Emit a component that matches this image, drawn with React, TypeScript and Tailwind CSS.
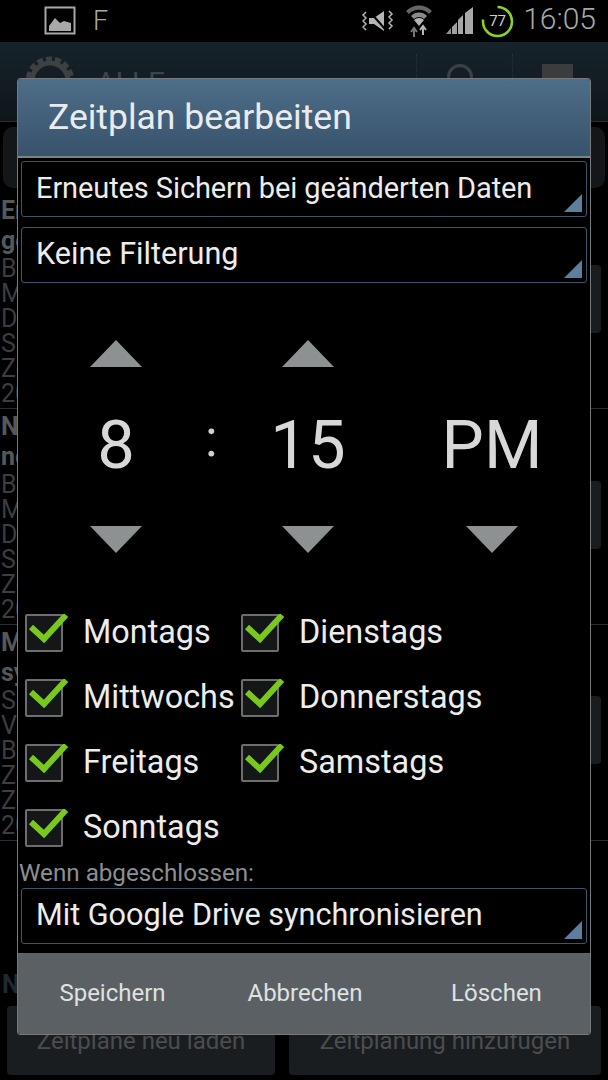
const sans = "font-['Roboto','Liberation_Sans',sans-serif]";

function Up() {
  return (
    <svg width="54" height="30" viewBox="0 0 54 30" className="block">
      <polygon points="27,1 53,28 1,28" fill="#8e9192" />
    </svg>
  );
}
function Down() {
  return (
    <svg width="54" height="30" viewBox="0 0 54 30" className="block">
      <polygon points="1,1 53,1 27,28" fill="#8e9192" />
    </svg>
  );
}

function Spinner({ text, cls, noUp }: { text: string; cls: string; noUp?: boolean }) {
  return (
    <div className={`flex flex-col items-center ${cls}`}>
      {noUp ? <div className="h-[30px]"></div> : <Up />}
      <div className="h-[156px] pb-[3px] flex items-center text-[67px] leading-none text-[#d8d8d8] font-normal">{text}</div>
      <Down />
    </div>
  );
}

function Select({ text, cls }: { text: string; cls: string }) {
  return (
    <div className={`relative mx-[3px] h-[56px] shrink-0 rounded-[3px] border border-[#3f5468] bg-black pl-[14px] flex items-center text-[#ececec] ${cls}`}>
      {text}
      <svg width="18" height="18" viewBox="0 0 18 18" className="absolute right-[4px] bottom-[4px]">
        <polygon points="18,0 18,18 0,18" fill="#5d7f9d" />
      </svg>
    </div>
  );
}

function Check({ label }: { label: string }) {
  return (
    <div className="flex items-center h-[65px]">
      <div className="relative ml-[7px] w-[38px] h-[38px] border-2 border-[#6e6e6e] rounded-[2px] bg-[#141618] shrink-0">
        <svg width="44" height="30" viewBox="0 0 44 30" className="absolute left-[-2px] top-[-2px]">
          <path d="M6 13 L19 25 L41 1" fill="none" stroke="#78c81e" strokeWidth="6" />
        </svg>
      </div>
      <div className="ml-[20px] text-[32.4px] text-[#ececec] whitespace-nowrap">{label}</div>
    </div>
  );
}

function BgBlock({ lines, top }: { lines: [string, boolean][]; top: string }) {
  return (
    <div className="flex justify-between pt-[3px] pb-[2px] pl-[1px] pr-[7px] border-b border-[#2a2d2f]">
      <div>
        {lines.map(([t, b], i) => (
          <div key={i} className={`whitespace-nowrap text-[25px] ${b ? "h-[30px] leading-[30px] font-bold text-[#53585b]" : "h-[25px] leading-[25px] text-[#3b3d3f]"}`}>{t}</div>
        ))}
      </div>
      <div className={`w-[60px] h-[68px] rounded-[4px] bg-[#1a1d1f] ${top}`}></div>
    </div>
  );
}

export default function App() {
  return (
    <div className={`relative w-[608px] h-[1080px] overflow-hidden bg-black ${sans}`}>
      {/* status bar */}
      <div className="h-[42px] bg-black flex items-center">
        <svg width="32" height="29" viewBox="0 0 32 29" className="ml-[44px] mt-[-1px]">
          <rect x="1.5" y="1.5" width="29" height="26" fill="none" stroke="#a8a8a8" strokeWidth="2" />
          <path d="M5 25 V20 L11 12 L16 17 L20 15 L27 17 V25 Z" fill="#a8a8a8" />
        </svg>
        <div className="ml-[17px] text-[27px] leading-none text-[#a8a8a8] font-light">F</div>
        <div className="ml-auto flex items-center">
          <svg width="32" height="24" viewBox="0 0 32 24" className="mr-[11px]">
            <path d="M7 9 H12 L22 2 V22 L12 15 H7 Z" fill="#b5b5b5" />
            <path d="M8 3 L23 20" stroke="#000" strokeWidth="2" />
            <path d="M4 3 L1 6 L4 9 L1 12 L4 15 L1 18 L4 21 M27 2 L30 5 L27 8 L30 11 L27 14 L30 17 L27 20" fill="none" stroke="#b5b5b5" strokeWidth="1.5" />
          </svg>
          <svg width="28" height="32" viewBox="0 0 28 32" className="mr-[13px]">
            <path d="M1 6 A18 18 0 0 1 27 6 L24 9 A14 14 0 0 0 4 9 Z" fill="#666" />
            <path d="M6 11 A11 11 0 0 1 22 11 L19 14 A7 7 0 0 0 9 14 Z" fill="#8a8a8a" />
            <path d="M14 21 L9 15 A7 7 0 0 1 19 15 Z" fill="#b5b5b5" />
            <path d="M9 32 V24 M6 27 L9 23 L12 27" stroke="#777" strokeWidth="2" fill="none" />
            <path d="M18 21 V30 M15 25 L18 21 L21 25" stroke="#b5b5b5" strokeWidth="2" fill="none" />
          </svg>
          <svg width="28" height="28" viewBox="0 0 28 28" className="mr-[7px]">
            <path d="M0 27 L5 21 V27 Z" fill="#8f8f8f" />
            <path d="M6 27 V20 L11 15 V27 Z" fill="#a0a0a0" />
            <path d="M12 27 V13 L17 8 V27 Z" fill="#a8a8a8" />
            <path d="M19 27 V6 L27 0 V27 Z" fill="#a8a8a8" />
          </svg>
          <div className="relative w-[33px] h-[33px] mr-[9px]">
            <svg width="33" height="33" viewBox="0 0 33 33" className="absolute inset-0">
              <circle cx="16.5" cy="16.5" r="14.5" fill="none" stroke="#8cd21e" strokeWidth="2.5" strokeDasharray="70 21" transform="rotate(-90 16.5 16.5)" />
            </svg>
            <div className="absolute inset-0 flex items-center justify-center text-[15px] text-[#d0d0d0] leading-none">77</div>
          </div>
          <div className="text-[30px] leading-none text-[#a8a8a8] font-light mr-[12px] mb-[4px]">16:05</div>
        </div>
      </div>
      {/* action bar (behind dialog) */}
      <div className="h-[80px] bg-gradient-to-b from-[#16232b] to-[#10161a] flex items-start border-b border-[#2a2d2f]">
        <svg width="50" height="50" viewBox="0 0 50 50" className="ml-[25px] mt-[14px]">
          <circle cx="25" cy="25" r="22" fill="none" stroke="#3d4144" strokeWidth="5" strokeDasharray="6 3" />
          <circle cx="25" cy="25" r="18" fill="none" stroke="#3d4144" strokeWidth="5" />
        </svg>
        <div className="ml-[21px] mt-[26px] text-[30px] leading-none text-[#3e4346]">ALLE</div>
        <div className="ml-auto mt-[12px] h-[50px] border-l border-dotted border-[#2c3338]"></div>
        <div className="ml-[30px] mt-[22px] w-[26px] h-[26px] rounded-full border-[3px] border-[#3e4144]"></div>
        <div className="ml-[39px] mt-[12px] h-[50px] border-l border-dotted border-[#2c3338]"></div>
        <div className="ml-[29px] mt-[22px] w-[31px] h-[31px] bg-[#3a3c3d] mr-[35px]"></div>
      </div>
      {/* page behind */}
      <div>
        <div className="mx-[3px] mt-[5px] h-[61px] rounded-[10px] bg-[#141719]"></div>
        <div className="mt-[5px]">
          <BgBlock top="mt-[69px]" lines={[["Erneutes", true], ["geänderte", true], ["Backup", false], ["Mit", false], ["Die", false], ["Sa", false], ["Zeit", false], ["2013", false]]} />
          <BgBlock top="mt-[69px]" lines={[["Nur", true], ["neue", true], ["Backup", false], ["Mit", false], ["Die", false], ["Sa", false], ["Zeit", false], ["2013", false]]} />
          <BgBlock top="mt-[68px]" lines={[["Mit", true], ["sync", true], ["Sa", false], ["Von", false], ["Backup", false], ["Zeit", false], ["Zeit", false], ["2013", false]]} />
        </div>
      </div>
      <div className="absolute left-0 bottom-[5px] w-full flex flex-col">
        <div className="pl-[2px] text-[#1f2a30] font-bold text-[25px] leading-[30px] mb-[6px]">N</div>
        <div className="flex gap-[14px] pl-[7px]">
          <div className="w-[268px] h-[69px] rounded-[4px] bg-[#1a1d1f] flex items-center justify-center text-[24px] text-[#4a4d4f]">Zeitpläne neu laden</div>
          <div className="w-[312px] h-[69px] rounded-[4px] bg-[#1a1d1f] flex items-center justify-center text-[24px] text-[#4a4d4f]">Zeitplanung hinzufügen</div>
        </div>
      </div>
      {/* dialog */}
      <div className="absolute left-[17px] top-[78px] w-[574px] h-[957px] rounded-[3px] border border-[#767a7d] bg-black flex flex-col overflow-hidden">
        <div className="h-[79px] shrink-0 bg-gradient-to-b from-[#4e6e89] to-[#38526b] border-b-2 border-[#7a8388] pl-[30px] flex items-center text-[35.5px] text-[#e8ecef]">Zeitplan bearbeiten</div>
        <div className="h-[3px] shrink-0"></div>
        <Select text="Erneutes Sichern bei geänderten Daten" cls="text-[29px] tracking-[-0.1px]" />
        <div className="h-[10px] shrink-0"></div>
        <Select text="Keine Filterung" cls="text-[30.6px] pb-[2px]" />
        <div className="h-[56px] shrink-0"></div>
        <div className="flex shrink-0 h-[216px]">
          <Spinner text="8" cls="w-[196px]" />
          <div className="w-[0px] relative">
            <div className="absolute left-[-9px] top-[74px] text-[52px] leading-none text-[#d0d0d0]">:</div>
          </div>
          <Spinner text="15" cls="w-[188px]" />
          <Spinner text="PM" noUp cls="w-[180px]" />
        </div>
        <div className="h-[45px] shrink-0"></div>
        <div className="grid grid-cols-[216px_1fr] shrink-0">
          <Check label="Montags" />
          <Check label="Dienstags" />
          <Check label="Mittwochs" />
          <Check label="Donnerstags" />
          <Check label="Freitags" />
          <Check label="Samstags" />
          <Check label="Sonntags" />
        </div>
        <div className="h-[29px] shrink-0 pl-[1px] text-[24.2px] leading-[29px] text-[#8c8f91] mt-[-1px]">Wenn abgeschlossen:</div>
        <Select text="Mit Google Drive synchronisieren" cls="text-[30.6px] pb-[3px]" />
        <div className="mt-auto h-[81px] shrink-0 bg-[#5b6065] grid grid-cols-[189px_196px_187px] items-center text-[24px] text-[#dfe1e2] text-center pb-[2px]">
          <div>Speichern</div>
          <div>Abbrechen</div>
          <div>Löschen</div>
        </div>
      </div>
    </div>
  );
}
